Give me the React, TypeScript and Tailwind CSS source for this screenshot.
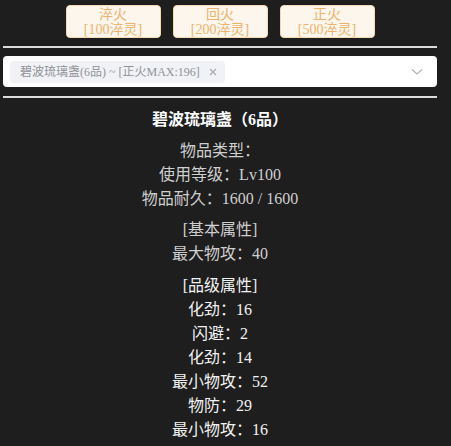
import React from "react";

const FONT = '"Liberation Serif", "Noto Sans CJK SC", serif';

const buttons = [
  { a: "淬火", b: "[100淬灵]" },
  { a: "回火", b: "[200淬灵]" },
  { a: "正火", b: "[500淬灵]" },
];

const info = ["物品类型：", "使用等级：Lv100", "物品耐久：1600 / 1600"];
const basic = ["[基本属性]", "最大物攻：40"];
const quality = ["[品级属性]", "化劲：16", "闪避：2", "化劲：14", "最小物攻：52", "物防：29", "最小物攻：16"];

export default function App() {
  return (
    <div className="w-[451px] h-[446px] overflow-hidden bg-[#1e1e1e]" style={{ fontFamily: FONT }}>
      <div className="pl-[3px] pr-[14px]">
        <div className="flex justify-center gap-[12px] pt-[5px]">
          {buttons.map((b) => (
            <div
              key={b.a}
              className="w-[95px] h-[33px] flex flex-col items-center justify-center rounded-[4px] border border-[#f5dab1] bg-[#fdf6ec] text-[14px] leading-[15px] text-[#ebb36c]"
            >
              <span>{b.a}</span>
              <span>{b.b}</span>
            </div>
          ))}
        </div>
        <div className="mt-[8px] h-[2px] bg-[#dcdcdc]" />
        <div className="mt-[8px] h-[31px] rounded-[4px] bg-white flex items-center pl-[7px] pr-[14px]">
          <div className="h-[22px] flex items-center rounded-[4px] bg-[#f0f2f5] pl-[10px] pr-[7px] text-[12px] text-[#909399] whitespace-nowrap">
            <span>碧波琉璃盏(6品) ~ [正火MAX:196]</span>
            <svg className="ml-[8px]" width="10" height="10" viewBox="0 0 10 10">
              <path d="M2 2 L8 8 M8 2 L2 8" stroke="#a8abb2" strokeWidth="1.2" fill="none" />
            </svg>
          </div>
          <div className="flex-1" />
          <svg width="12" height="8" viewBox="0 0 12 8">
            <path d="M1 1.5 L6 6 L11 1.5" stroke="#b0b3b9" strokeWidth="1.2" fill="none" />
          </svg>
        </div>
        <div className="mt-[9px] h-[2px] bg-[#dcdcdc]" />
        <div className="text-center text-[16px] leading-[24px]">
          <div className="mt-[10px] font-bold text-white">碧波琉璃盏（6品）</div>
          <div className="mt-[7px] text-[#cfcfcf]">
            {info.map((t) => (
              <div key={t}>{t}</div>
            ))}
          </div>
          <div className="mt-[7px] text-[#cfcfcf]">
            {basic.map((t) => (
              <div key={t}>{t}</div>
            ))}
          </div>
          <div className="mt-[8px] text-[#f2f2f2]">
            {quality.map((t, i) => (
              <div key={i}>{t}</div>
            ))}
          </div>
        </div>
      </div>
    </div>
  );
}
